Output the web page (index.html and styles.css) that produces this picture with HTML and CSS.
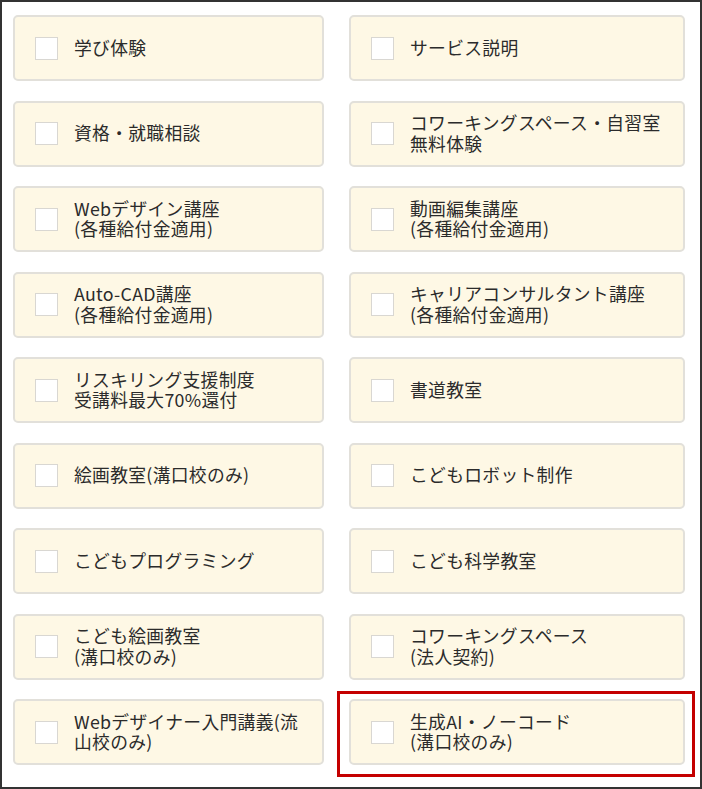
FILE: index.html
```html
<!DOCTYPE html>
<html lang="ja">
<head>
<meta charset="utf-8">
<title>選択肢</title>
<link rel="stylesheet" href="styles.css">
</head>
<body>
<div class="frame">
  <ul class="grid">
    <li class="cell"><label class="card"><span class="box"></span><span class="label"><span class="line">学び体験</span></span></label></li>
    <li class="cell"><label class="card"><span class="box"></span><span class="label"><span class="line">サービス説明</span></span></label></li>
    <li class="cell"><label class="card"><span class="box"></span><span class="label"><span class="line">資格・就職相談</span></span></label></li>
    <li class="cell"><label class="card"><span class="box"></span><span class="label"><span class="line">コワーキングスペース・自習室</span><span class="line">無料体験</span></span></label></li>
    <li class="cell"><label class="card"><span class="box"></span><span class="label"><span class="line">Webデザイン講座</span><span class="line">(各種給付金適用)</span></span></label></li>
    <li class="cell"><label class="card"><span class="box"></span><span class="label"><span class="line">動画編集講座</span><span class="line">(各種給付金適用)</span></span></label></li>
    <li class="cell"><label class="card"><span class="box"></span><span class="label"><span class="line">Auto-CAD講座</span><span class="line">(各種給付金適用)</span></span></label></li>
    <li class="cell"><label class="card"><span class="box"></span><span class="label"><span class="line">キャリアコンサルタント講座</span><span class="line">(各種給付金適用)</span></span></label></li>
    <li class="cell"><label class="card"><span class="box"></span><span class="label"><span class="line">リスキリング支援制度</span><span class="line">受講料最大70%還付</span></span></label></li>
    <li class="cell"><label class="card"><span class="box"></span><span class="label"><span class="line">書道教室</span></span></label></li>
    <li class="cell"><label class="card"><span class="box"></span><span class="label"><span class="line">絵画教室(溝口校のみ)</span></span></label></li>
    <li class="cell"><label class="card"><span class="box"></span><span class="label"><span class="line">こどもロボット制作</span></span></label></li>
    <li class="cell"><label class="card"><span class="box"></span><span class="label"><span class="line">こどもプログラミング</span></span></label></li>
    <li class="cell"><label class="card"><span class="box"></span><span class="label"><span class="line">こども科学教室</span></span></label></li>
    <li class="cell"><label class="card"><span class="box"></span><span class="label"><span class="line">こども絵画教室</span><span class="line">(溝口校のみ)</span></span></label></li>
    <li class="cell"><label class="card"><span class="box"></span><span class="label"><span class="line">コワーキングスペース</span><span class="line">(法人契約)</span></span></label></li>
    <li class="cell"><label class="card"><span class="box"></span><span class="label"><span class="line">Webデザイナー入門講義(流</span><span class="line">山校のみ)</span></span></label></li>
    <li class="cell highlighted"><label class="card"><span class="box"></span><span class="label"><span class="line">生成AI・ノーコード</span><span class="line">(溝口校のみ)</span></span></label></li>
  </ul>
</div>
</body>
</html>
```
FILE: styles.css
```css
* { box-sizing: border-box; }
html, body { margin: 0; padding: 0; background: #fff; }
.frame {
  width: 702px;
  height: 789px;
  border: 2px solid #333;
  padding: 13px 0 0 11px;
  font-family: "Noto Sans CJK JP", "Noto Sans", sans-serif;
  color: #2b2b2b;
}
.grid {
  list-style: none;
  margin: 0;
  padding: 0;
  display: grid;
  grid-template-columns: 311px 336px;
  grid-auto-rows: 66px;
  column-gap: 25px;
  row-gap: 19.5px;
}
.cell { position: relative; }
.card {
  display: flex;
  align-items: center;
  height: 100%;
  background: #fef8e5;
  border: 2px solid #e2e0da;
  border-radius: 5px;
  padding: 0 10px 2px 20px;
}
.box {
  flex: none;
  width: 23px;
  height: 23px;
  background: #fff;
  border: 1px solid #d9d7d2;
  margin: 2px 16px 0 0;
}
.label {
  display: flex;
  flex-direction: column;
  font-size: 17.8px;
  letter-spacing: 0.3px;
}
.line {
  display: block;
  height: 20.5px;
  line-height: 20.5px;
  white-space: nowrap;
}
.highlighted::after {
  content: "";
  position: absolute;
  top: -8px;
  left: -12px;
  right: -10px;
  bottom: -12px;
  border: 3px solid #c40000;
  pointer-events: none;
}
```
